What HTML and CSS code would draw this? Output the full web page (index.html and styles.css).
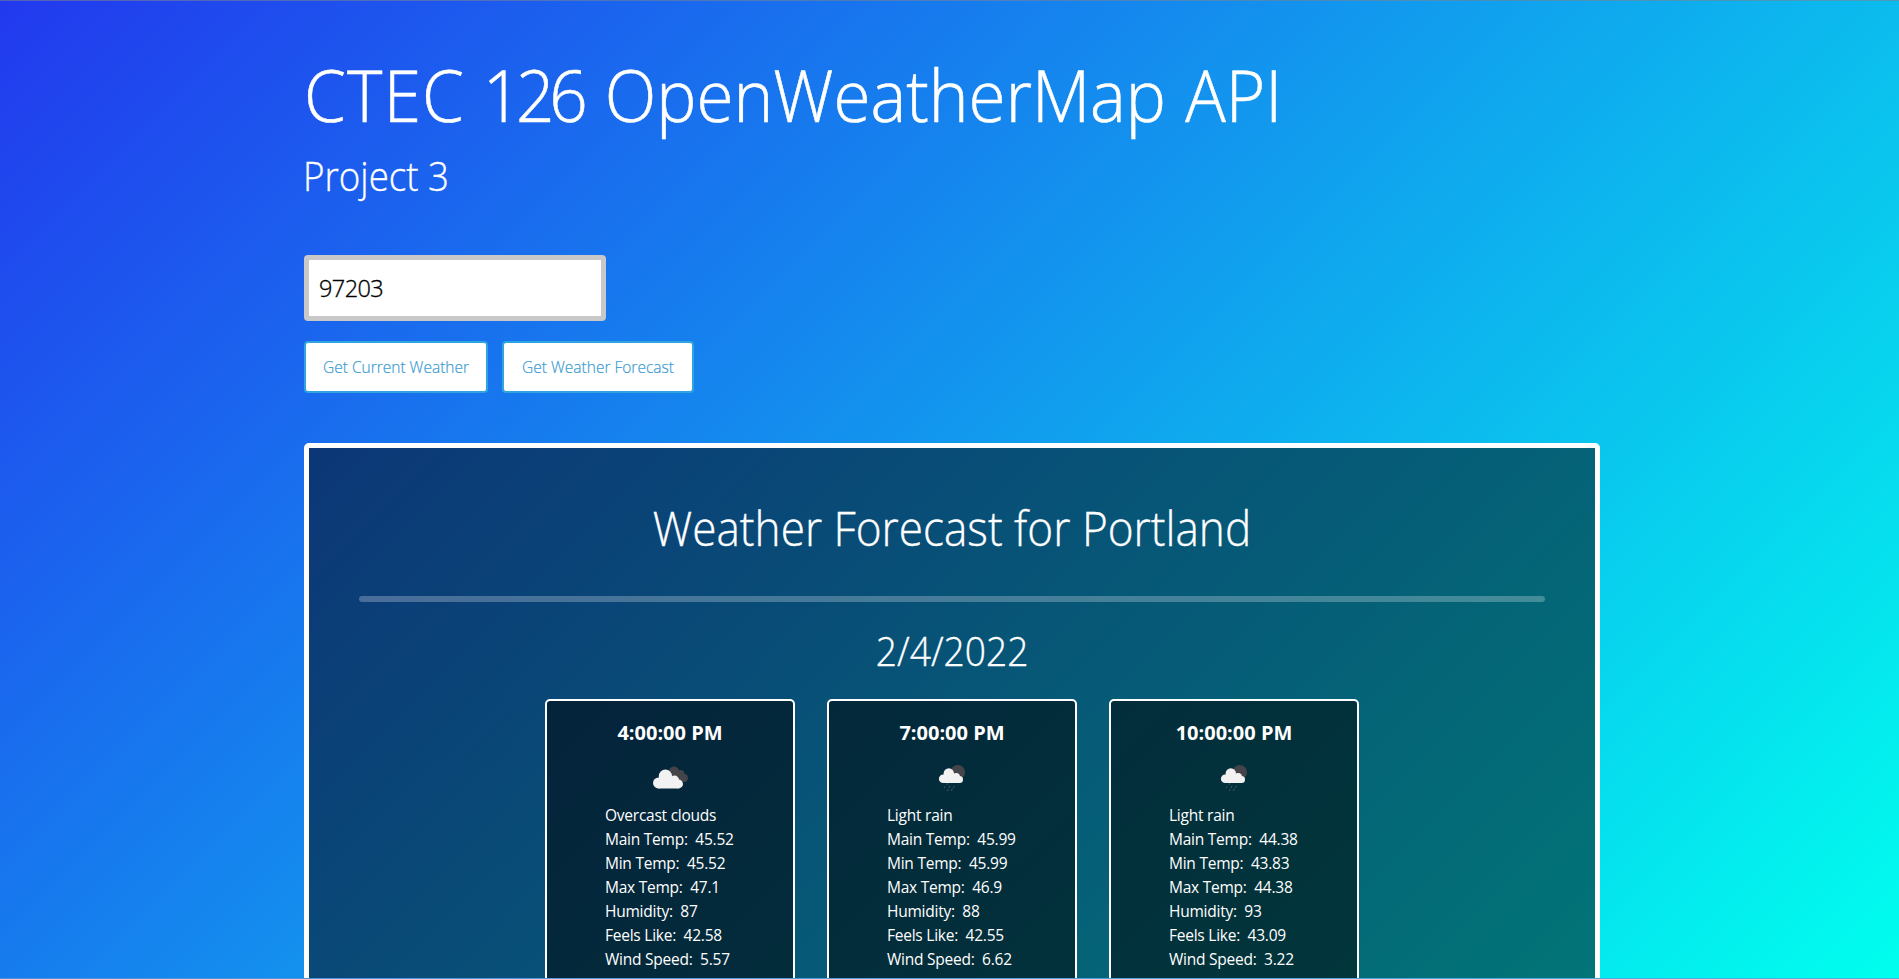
FILE: index.html
```html
<!DOCTYPE html>
<html lang="en">
<head>
<meta charset="utf-8">
<title>CTEC 126 OpenWeatherMap API</title>
<link rel="stylesheet" href="styles.css">
</head>
<body>
<svg width="0" height="0" class="defs" aria-hidden="true">
  <symbol id="overcast" viewBox="0 0 50 50">
    <g fill="#454549"><circle cx="29" cy="18.8" r="5.2"/><circle cx="35.4" cy="21" r="4"/><circle cx="39" cy="25" r="3.9"/><path d="M25 18h9l8 9-4 2H27z"/></g>
    <g fill="#f2f2f3"><circle cx="13.4" cy="30" r="5.4"/><circle cx="20.4" cy="23.2" r="6.6"/><circle cx="29.5" cy="27.2" r="4.6"/><circle cx="33.6" cy="31" r="4.4"/><path d="M13.4 26l3-3h10l7 5 .2 7.4H13.4z"/></g>
  </symbol>
  <symbol id="rain" viewBox="0 0 50 50">
    <circle cx="30.8" cy="19.2" r="7.2" fill="#454549"/>
    <g fill="#f2f2f3"><circle cx="16.2" cy="25.8" r="4.3"/><circle cx="21.8" cy="20.4" r="5.2"/><circle cx="29.2" cy="23.6" r="3.7"/><circle cx="32.5" cy="26.6" r="3.5"/><path d="M16.2 22l3-2h7l6 4 .3 6.1H16.2z"/></g>
    <g stroke="#4b5d65" stroke-width="1" stroke-linecap="round"><path d="M20.5 30.6l-.4.8M17.8 33.8l-.5.9M22.8 33.2l-.7 1.4M27.2 33.3l-.6 1.1M21.2 36.6l-.6 1M25.2 36l-.7 1.4"/></g>
  </symbol>
</svg>
<main class="page">
  <h1 class="title"><span><i class="course">CTEC</i> <i class="number">126</i> <i class="name">OpenWeatherMap</i> API</span></h1>
  <h2 class="subtitle"><span>Project 3</span></h2>
  <input class="zip" type="text" value="97203">
  <div class="buttons">
    <button class="btn btn-current">Get Current Weather</button>
    <button class="btn btn-forecast">Get Weather Forecast</button>
  </div>
  <section class="panel">
    <h2 class="heading"><span>Weather Forecast for Portland</span></h2>
    <hr class="rule">
    <h3 class="date"><span>2/4/2022</span></h3>
    <div class="cards">
      <article class="card">
        <h4 class="time">4:00:00 PM</h4>
        <svg class="icon"><use href="#overcast"/></svg>
        <div class="details"><p>Overcast clouds</p><p>Main Temp:&nbsp; 45.52</p><p>Min Temp:&nbsp; 45.52</p><p>Max Temp:&nbsp; 47.1</p><p>Humidity:&nbsp; 87</p><p>Feels Like:&nbsp; 42.58</p><p>Wind Speed:&nbsp; 5.57</p></div>
      </article>
      <article class="card">
        <h4 class="time">7:00:00 PM</h4>
        <svg class="icon"><use href="#rain"/></svg>
        <div class="details"><p>Light rain</p><p>Main Temp:&nbsp; 45.99</p><p>Min Temp:&nbsp; 45.99</p><p>Max Temp:&nbsp; 46.9</p><p>Humidity:&nbsp; 88</p><p>Feels Like:&nbsp; 42.55</p><p>Wind Speed:&nbsp; 6.62</p></div>
      </article>
      <article class="card">
        <h4 class="time">10:00:00 PM</h4>
        <svg class="icon"><use href="#rain"/></svg>
        <div class="details"><p>Light rain</p><p>Main Temp:&nbsp; 44.38</p><p>Min Temp:&nbsp; 43.83</p><p>Max Temp:&nbsp; 44.38</p><p>Humidity:&nbsp; 93</p><p>Feels Like:&nbsp; 43.09</p><p>Wind Speed:&nbsp; 3.22</p></div>
      </article>
    </div>
  </section>
</main>
</body>
</html>
```
FILE: styles.css
```css
* { box-sizing: border-box; }
html, body { margin: 0; overflow: hidden; }
body {
  height: 100vh;
  font-family: "Open Sans", "Noto Sans", sans-serif;
  color: #fff;
}
.defs { display: block; height: 0; }
.page {
  height: 979px;
  padding: 51px 299px 0 304px;
  overflow: hidden;
  border-top: 1px solid rgba(125, 130, 140, .55);
  border-bottom: 1px solid rgba(100, 150, 215, .75);
  background: linear-gradient(135deg, #2239ee, #00ffee) border-box;
}
h1, h2, h3, h4, p { margin: 0; }
.title, .subtitle, .heading, .date { font-weight: 300; white-space: nowrap; -webkit-text-stroke: .35px #fff; }
.title span, .subtitle span, .heading span, .date span { display: inline-block; transform-origin: left center; }
.title { font-size: 71.5px; line-height: 86px; -webkit-text-stroke-width: .6px; }
.title span { transform: scaleX(.943); }
.title i { font-style: normal; }
.course { letter-spacing: 1.3px; }
.number { letter-spacing: -5.5px; margin-right: 5px; }
.name { margin-right: 2px; }
.subtitle { margin-top: 14px; font-size: 39.5px; line-height: 48px; }
.subtitle span { transform: scaleX(.93); margin-left: -1px; }
.zip {
  display: block;
  width: 302px;
  height: 66px;
  margin-top: 55px;
  padding: 0 10px;
  border: 5px solid #c8c8c8;
  border-radius: 4px;
  background: #fff;
  color: #000;
  font: 300 23.5px "Open Sans", sans-serif;
  letter-spacing: -.6px;
  -webkit-text-stroke: .35px #000;
}
.buttons { display: flex; gap: 14px; margin-top: 20px; }
.btn {
  height: 52px;
  padding: 0;
  border: 2px solid #2fa4e0;
  border-radius: 4px;
  background: #fff;
  color: #3b9bd0;
  font: 300 15.5px "Open Sans", sans-serif;
  letter-spacing: 0;
  -webkit-text-stroke: .2px #3b9bd0;
}
.btn-current { width: 184px; }
.btn-forecast { width: 192px; }
.panel {
  height: 700px;
  margin-top: 50px;
  padding: 51px 50px 0;
  border: 5px solid #fff;
  border-radius: 5px;
  background: rgba(0, 0, 0, .5);
}
.heading, .date { text-align: center; }
.heading span, .date span { transform-origin: center; }
.heading { font-size: 47.5px; line-height: 58px; }
.heading span { transform: scaleX(.929); }
.rule { height: 6px; margin: 39px 0 0; border: 0; border-radius: 3px; background: rgba(255, 255, 255, .25); }
.date { margin-top: 25px; font-size: 39.5px; line-height: 48px; }
.date span { transform: scaleX(.94); }
.cards { display: flex; justify-content: center; gap: 32px; margin-top: 24px; }
.card {
  width: 250px;
  height: 380px;
  padding-top: 20px;
  border: 2px solid #fff;
  border-radius: 5px;
  background: rgba(0, 0, 0, .5);
}
.time { font-size: 20px; line-height: 24px; font-weight: 700; text-align: center; }
.icon { display: block; width: 50px; height: 50px; margin: 8px auto 0; }
.details { padding-left: 58px; font-size: 15.5px; line-height: 24px; letter-spacing: -.24px; white-space: nowrap; }
```
